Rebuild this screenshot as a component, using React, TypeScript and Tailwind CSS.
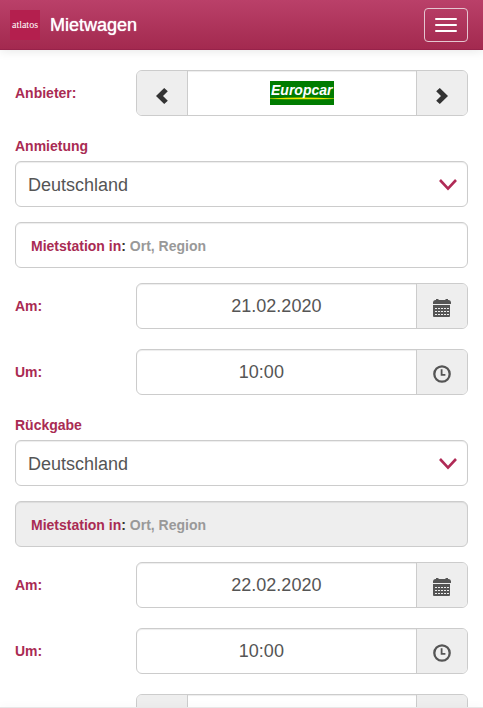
import { useState, type ReactNode } from 'react';

const field =
  'rounded-md border border-[#ccc] shadow-[inset_0_1px_1px_rgba(0,0,0,0.075)]';
const heading = 'block text-sm leading-5 font-bold text-[#a92b53]';

function ChevronLeft() {
  return (
    <svg width="12" height="16" viewBox="0 0 12 16" aria-hidden="true">
      <path d="M8.2 0 L11.8 3.2 L7 8 L11.8 12.8 L8.2 16 L0 8 Z" fill="#333" />
    </svg>
  );
}

function ChevronRight() {
  return (
    <svg width="12" height="16" viewBox="0 0 12 16" aria-hidden="true">
      <path d="M3.8 0 L0.2 3.2 L5 8 L0.2 12.8 L3.8 16 L12 8 Z" fill="#333" />
    </svg>
  );
}

function CalendarIcon() {
  return (
    <svg width="18" height="18" viewBox="0 0 18 18" aria-hidden="true">
      <path
        d="M0 5 V3 Q0.5 1 2.5 1 H3 V0 H5.5 V1 H12.5 V0 H15 V1 H15.5 Q17.5 1 18 3 V5 Z"
        fill="#555"
      />
      <path d="M0 6 H17 V17 Q17 18 16 18 H1 Q0 18 0 17 Z" fill="#555" />
      <path
        d="M2 9.5 H16 M2 12.5 H16 M2 15.5 H16"
        stroke="#eee"
        strokeWidth="1"
        strokeDasharray="2 1"
      />
    </svg>
  );
}

function ClockIcon() {
  return (
    <svg width="18" height="18" viewBox="0 0 18 18" fill="none" stroke="#555" aria-hidden="true">
      <circle cx="9" cy="9" r="7.7" strokeWidth="2.3" />
      <path d="M8.6 4.3 V9.8 H12.4" strokeWidth="1.8" />
    </svg>
  );
}

function EuropcarLogo() {
  return (
    <svg width="64" height="24" viewBox="0 0 64 24" role="img" aria-label="Europcar">
      <rect width="64" height="24" fill="#007c00" />
      <path d="M0 17.4 Q32 15.4 64 17.4 V18 Q32 18.6 0 18 Z" fill="#f0e800" />
      <text
        x="1"
        y="14"
        fill="#fff"
        fontFamily="'Liberation Sans', Arial, sans-serif"
        fontSize="14"
        fontWeight="bold"
        fontStyle="italic"
      >
        Europcar
      </text>
    </svg>
  );
}

function FormRow({ label, id, children }: { label?: string; id?: string; children: ReactNode }) {
  return (
    <div className="flex items-center">
      <div className="w-1/4 pl-[15px]">
        {label && (
          <label htmlFor={id} className={heading}>
            {label}
          </label>
        )}
      </div>
      <div className="w-3/4 px-[15px]">{children}</div>
    </div>
  );
}

function ProviderPicker({ id, children }: { id?: string; children?: ReactNode }) {
  return (
    <div className={`flex h-[46px] overflow-hidden bg-white ${field}`}>
      <button
        id={id}
        type="button"
        aria-label="Zurück"
        className="flex w-[51px] items-center justify-center border-r border-[#ccc] bg-[#eee] pt-1.5"
      >
        <ChevronLeft />
      </button>
      <div className="flex flex-1 items-center justify-center">{children}</div>
      <button
        type="button"
        aria-label="Weiter"
        className="flex w-[51px] items-center justify-center border-l border-[#ccc] bg-[#eee] pt-1.5"
      >
        <ChevronRight />
      </button>
    </div>
  );
}

function IconInput({
  id,
  initial,
  icon,
  button,
  inputClass = '',
}: {
  id: string;
  initial: string;
  icon: ReactNode;
  button: string;
  inputClass?: string;
}) {
  const [value, setValue] = useState(initial);
  return (
    <div className={`flex h-[46px] overflow-hidden bg-white ${field}`}>
      <input
        id={id}
        type="text"
        value={value}
        onChange={(e) => setValue(e.target.value)}
        className={`min-w-0 flex-1 text-center text-lg text-[#555] outline-none ${inputClass}`}
      />
      <button
        type="button"
        aria-label={button}
        className="flex w-[51px] items-center justify-center border-l border-[#ccc] bg-[#eee] pt-1"
      >
        {icon}
      </button>
    </div>
  );
}

function StationSection({
  name,
  title,
  date,
  disabled = false,
}: {
  name: string;
  title: string;
  date: string;
  disabled?: boolean;
}) {
  return (
    <section className="mt-5">
      <div className="px-[15px]">
        <label htmlFor={`${name}-land`} className={`mb-[5px] ${heading}`}>
          {title}
        </label>
        <div className="grid">
          <select
            id={`${name}-land`}
            className={`col-start-1 row-start-1 h-[46px] w-full appearance-none bg-white px-3 pt-0.5 text-lg text-[#555] ${field}`}
          >
            <option>Deutschland</option>
          </select>
          <svg
            width="18"
            height="12"
            viewBox="0 0 18 12"
            className="pointer-events-none col-start-1 row-start-1 mt-0.5 mr-[11px] self-center justify-self-end"
            aria-hidden="true"
          >
            <path d="M1 1 L9 9.6 L17 1" fill="none" stroke="#b02a56" strokeWidth="2.6" />
          </svg>
        </div>
        <div
          className={`mt-[15px] flex h-[46px] items-center px-[15px] pt-0.5 text-sm font-bold ${field} ${
            disabled ? 'bg-[#eee]' : 'bg-white'
          }`}
        >
          <label htmlFor={`${name}-station`} className="whitespace-pre text-[#333]">
            <span className="text-[#a92b53]">Mietstation in</span>:{' '}
          </label>
          <input
            id={`${name}-station`}
            type="text"
            placeholder="Ort, Region"
            disabled={disabled}
            className="min-w-0 flex-1 font-bold outline-none placeholder:text-[#999]"
          />
        </div>
      </div>
      <div className="mt-[15px] space-y-5">
        <FormRow label="Am:" id={`${name}-datum`}>
          <IconInput id={`${name}-datum`} initial={date} icon={<CalendarIcon />} button="Kalender" />
        </FormRow>
        <FormRow label="Um:" id={`${name}-zeit`}>
          <IconInput
            id={`${name}-zeit`}
            initial="10:00"
            icon={<ClockIcon />}
            button="Uhrzeit"
            inputClass="pr-[30px]"
          />
        </FormRow>
      </div>
    </section>
  );
}

export default function App() {
  return (
    <div className="h-screen overflow-hidden bg-white font-['Liberation_Sans',Arial,sans-serif]">
      <header className="flex h-[50px] items-center border-b border-[#97224a] bg-linear-to-b from-[#ba4069] to-[#a3294f] px-[10px] shadow-[0_1px_10px_rgba(0,0,0,0.1)]">
        <a
          href="#"
          className="flex size-[30px] items-center justify-center bg-[#b41f4e] font-['Liberation_Serif',serif] text-[10px] leading-none text-white"
        >
          atlatos
        </a>
        <h1 className="ml-[10px] text-lg leading-5 text-white [text-shadow:0_0_1px_#fff]">Mietwagen</h1>
        <button
          type="button"
          aria-label="Menü"
          className="mr-[5px] ml-auto flex h-[34px] w-[44px] flex-col items-center justify-center gap-1 rounded border border-[#e5c5d0]"
        >
          <span className="h-0.5 w-[22px] rounded-[1px] bg-white" />
          <span className="h-0.5 w-[22px] rounded-[1px] bg-white" />
          <span className="h-0.5 w-[22px] rounded-[1px] bg-white" />
        </button>
      </header>

      <form className="pt-5">
        <FormRow label="Anbieter:" id="anbieter">
          <ProviderPicker id="anbieter">
            <EuropcarLogo />
          </ProviderPicker>
        </FormRow>
        <StationSection name="anmietung" title="Anmietung" date="21.02.2020" />
        <StationSection name="rueckgabe" title="Rückgabe" date="22.02.2020" disabled />
        <div className="mt-5">
          <FormRow>
            <ProviderPicker />
          </FormRow>
        </div>
      </form>

      {/* top edge of the bottom bar */}
      <footer className="fixed inset-x-0 bottom-0 h-px bg-[#e7e7e7] shadow-[0_-1px_6px_rgba(0,0,0,0.1)]" />
    </div>
  );
}
